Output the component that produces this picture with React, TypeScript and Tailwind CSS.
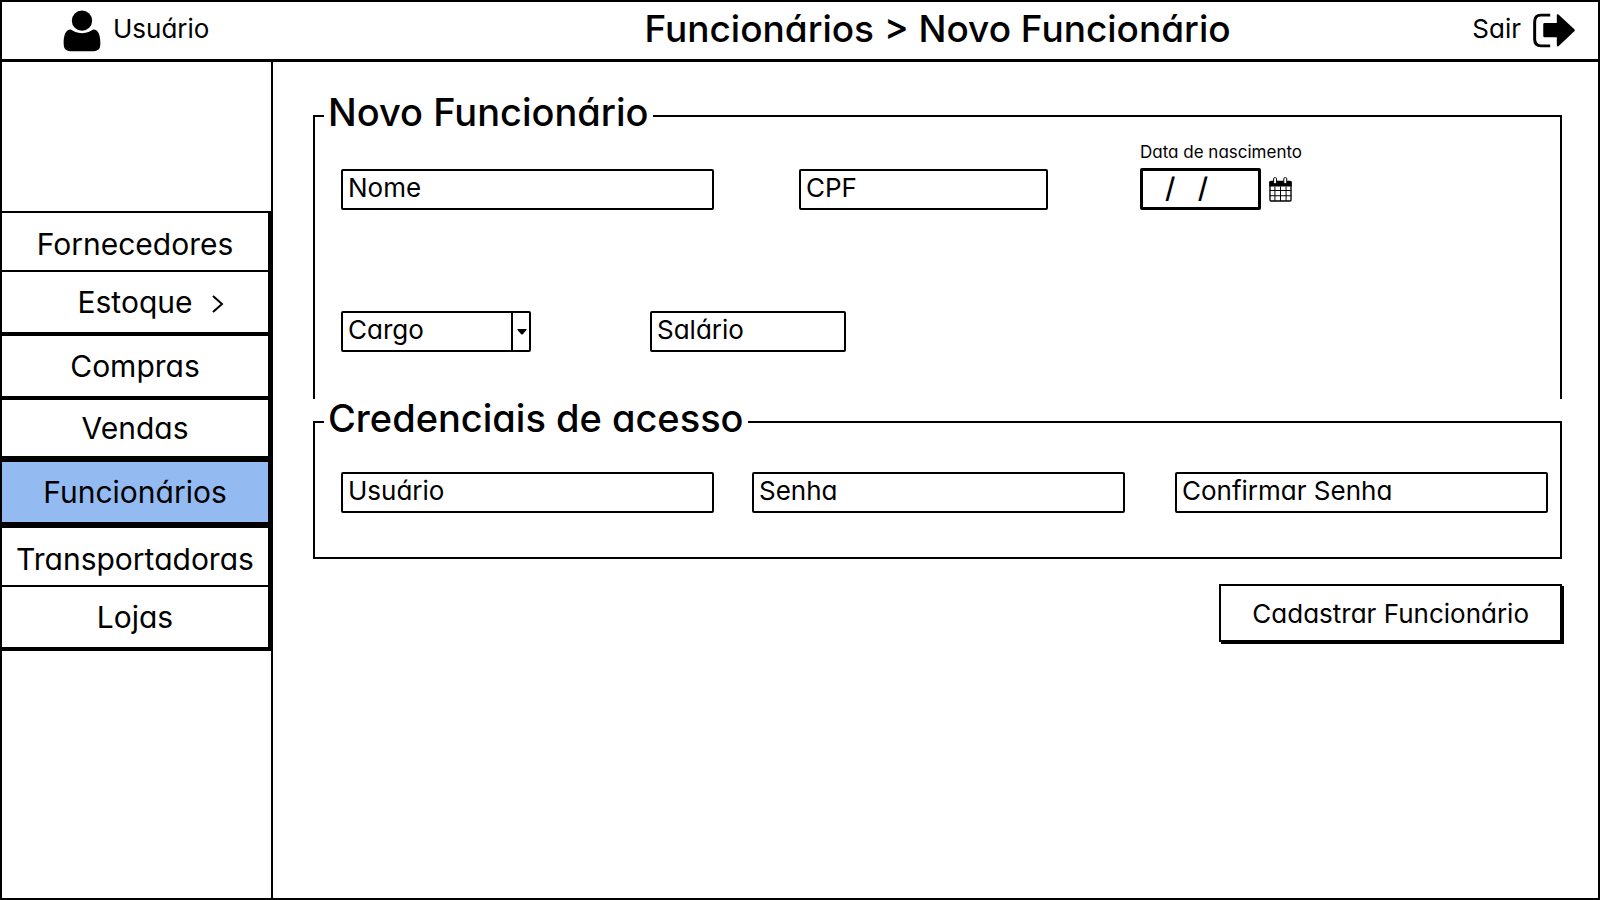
import type { InputHTMLAttributes } from "react";

const navItems = [
  { label: "Fornecedores", box: "h-[53px] pt-1 border-b-2" },
  { label: "Estoque", box: "h-15 border-b-4", expandable: true },
  { label: "Compras", box: "h-15 border-b-4" },
  { label: "Vendas", box: "h-14 border-b-6" },
  { label: "Funcionários", box: "h-15 border-b-6", active: true },
  { label: "Transportadoras", box: "h-[53px] pt-1 border-b-2" },
  { label: "Lojas", box: "h-15 border-b-4" },
];

function UserIcon() {
  return (
    <svg viewBox="188 28 116 127" className="h-[42px] w-[38px] shrink-0" aria-hidden="true">
      <circle cx="246" cy="60" r="31" />
      <path d="M212 87C195 87 190 106 190 130C190 146 197 153 210 153H282C296 153 302 146 302 130C302 106 297 87 280 87C272 92 262 98 246 98C230 98 220 92 212 87Z" />
    </svg>
  );
}

function ExitIcon() {
  return (
    <svg viewBox="398 40 127 105" className="h-[35px] w-[42px] shrink-0" aria-hidden="true">
      <path d="M450 46H422Q403 46 403 66V119Q403 139 422 139H450" fill="none" stroke="black" strokeWidth="9" />
      <path d="M433 70H470V46Q471 42 475 44L523 89Q526 92 523 95L475 140Q471 143 470 138V113H433Q429 113 429 109V74Q429 70 433 70Z" />
    </svg>
  );
}

function CalendarIcon() {
  return (
    <svg viewBox="83 51 70 76" className="h-[25px] w-[23px]" aria-hidden="true">
      <rect x="86" y="64" width="64" height="60" rx="3" fill="white" stroke="black" strokeWidth="4" />
      <path d="M84 80V67Q84 63 88 63H148Q152 63 152 67V80Z" />
      <path d="M101 80V124M118 80V124M135 80V124M85 92H151M85 108H151" stroke="black" strokeWidth="3" />
      <rect x="97" y="53" width="9" height="18" rx="3" fill="white" stroke="black" strokeWidth="3" />
      <rect x="128" y="53" width="9" height="18" rx="3" fill="white" stroke="black" strokeWidth="3" />
    </svg>
  );
}

function TextField({ id, label, ...rest }: { id: string; label: string } & InputHTMLAttributes<HTMLInputElement>) {
  return (
    <input
      id={id}
      aria-label={label}
      placeholder={label}
      className="block h-[41px] w-full min-w-0 rounded-[2px] border-2 border-black bg-white px-[5px] pb-1 text-[26px] leading-8 placeholder:text-black placeholder:opacity-100"
      {...rest}
    />
  );
}

export default function App() {
  return (
    <div className="flex min-h-screen flex-col border-2 border-black bg-white font-['Inter','Liberation_Sans',sans-serif] text-black [font-feature-settings:'cv11']">
      <header className="grid h-[60px] grid-cols-[269px_1fr_134px] items-center border-b-3 border-black">
        <div className="flex items-center gap-3 pl-[61px] text-[26px]">
          <UserIcon />
          <span className="pb-1">Usuário</span>
        </div>
        <h1 className="pb-1 pl-[140px] text-center text-[37px] leading-none font-medium whitespace-nowrap">
          Funcionários &gt; Novo Funcionário
        </h1>
        <a href="#sair" className="flex items-center justify-end gap-3 pr-[23px] text-[26px]">
          <span className="pb-1">Sair</span>
          <ExitIcon />
        </a>
      </header>

      <div className="flex flex-1">
        <aside className="w-[271px] shrink-0 border-r-2 border-black pt-[149px]">
          <nav className="border-t-2 border-r-3 border-black">
            <ul>
              {navItems.map((item) => (
                <li key={item.label} className={item.active ? "bg-[#94baf2]" : ""}>
                  <a
                    href={"#" + item.label.toLowerCase()}
                    aria-current={item.active ? "page" : undefined}
                    className={`box-content grid grid-cols-[1fr_auto_1fr] items-center border-black text-[30px] leading-9 ${item.box}`}
                  >
                    <span className="col-start-2">{item.label}</span>
                    {item.expandable && (
                      <svg viewBox="0 0 12 18" className="mt-1 ml-5 h-[18px] w-3" fill="none" stroke="black" strokeWidth="2" aria-hidden="true">
                        <path d="M1 1L10 9L1 17" />
                      </svg>
                    )}
                  </a>
                </li>
              ))}
            </ul>
          </nav>
        </aside>

        <main className="min-w-0 flex-1 pt-[31px] pr-9 pl-10">
          <form>
            <fieldset className="h-[306px] border-2 border-b-0 border-black pr-3 pl-[26px]">
              <legend className="-ml-[17px] px-1 pb-2 text-[38px] leading-[38px] font-medium">Novo Funcionário</legend>
              <div className="flex items-end pt-px">
                <div className="flex-[373]">
                  <TextField id="nome" label="Nome" />
                </div>
                <div className="ml-[85px] flex-[249]">
                  <TextField id="cpf" label="CPF" />
                </div>
                <div className="ml-[92px] flex-[408]">
                  <label htmlFor="nascimento" className="block pb-1 text-[17px] leading-6">
                    Data de nascimento
                  </label>
                  <div className="flex items-center gap-2">
                    <input
                      id="nascimento"
                      placeholder="/   /"
                      className="h-[42px] w-[121px] rounded-[2px] border-3 border-black bg-white pb-0.5 pl-[22px] text-[28px] leading-[34px] font-medium placeholder:text-black placeholder:opacity-100"
                    />
                    <button type="button" aria-label="Abrir calendário">
                      <CalendarIcon />
                    </button>
                  </div>
                </div>
              </div>
              <div className="mt-[101px] grid grid-cols-[190fr_196fr_583fr] gap-x-[119px]">
                <div className="relative">
                  <select
                    id="cargo"
                    aria-label="Cargo"
                    className="block h-[41px] w-full appearance-none rounded-[2px] border-2 border-black bg-white px-[5px] pb-1 text-[26px] leading-8"
                  >
                    <option>Cargo</option>
                  </select>
                  <span className="pointer-events-none absolute inset-y-0 right-0 flex w-5 items-center justify-center border-l-2 border-black">
                    <svg viewBox="0 0 10 6" className="h-[6px] w-[10px]" aria-hidden="true">
                      <path d="M1 0H9Q10 0 9.500 1L6 5Q5 6 4 5L0.500 1Q0 0 1 0Z" />
                    </svg>
                  </span>
                </div>
                <TextField id="salario" label="Salário" />
              </div>
            </fieldset>

            <fieldset className="border-2 border-black pr-3 pb-11 pl-[26px]">
              <legend className="-ml-[17px] px-1 pb-2 text-[38px] leading-[38px] font-medium">Credenciais de acesso</legend>
              <div className="flex pt-[27px]">
                <div className="flex-1">
                  <TextField id="usuario" label="Usuário" autoComplete="username" />
                </div>
                <div className="ml-[38px] flex-1">
                  <TextField id="senha" label="Senha" type="password" autoComplete="new-password" />
                </div>
                <div className="ml-[50px] flex-1">
                  <TextField id="confirmar" label="Confirmar Senha" type="password" autoComplete="new-password" />
                </div>
              </div>
            </fieldset>

            <div className="mt-[25px] flex justify-end">
              <button
                type="submit"
                className="h-[58px] border-2 border-black bg-white px-[31px] text-[26px] shadow-[2px_2px_0_0_black]"
              >
                Cadastrar Funcionário
              </button>
            </div>
          </form>
        </main>
      </div>
    </div>
  );
}
